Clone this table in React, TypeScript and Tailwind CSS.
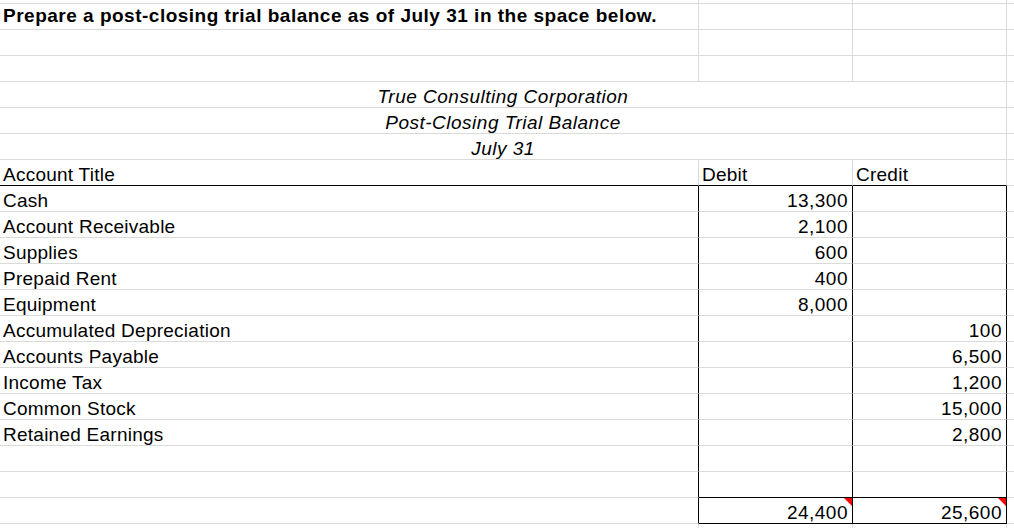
import React from 'react';

type Line = { title: string; debit?: string; credit?: string };

const lines: Line[] = [
  { title: 'Cash', debit: '13,300' },
  { title: 'Account Receivable', debit: '2,100' },
  { title: 'Supplies', debit: '600' },
  { title: 'Prepaid Rent', debit: '400' },
  { title: 'Equipment', debit: '8,000' },
  { title: 'Accumulated Depreciation', credit: '100' },
  { title: 'Accounts Payable', credit: '6,500' },
  { title: 'Income Tax', credit: '1,200' },
  { title: 'Common Stock', credit: '15,000' },
  { title: 'Retained Earnings', credit: '2,800' },
  { title: '' },
  { title: '' },
];

const grid = 'border-[#dadada]';

function Marker() {
  return (
    <svg className="absolute right-0 top-0" width="8" height="8" viewBox="0 0 8 8">
      <polygon points="0,0 8,0 8,8" fill="#ff0000" />
    </svg>
  );
}

function PlainRow() {
  return (
    <div className={`flex h-[26px] border-b ${grid}`}>
      <div className={`w-[699px] shrink-0 border-r ${grid}`} />
      <div className={`w-[154px] shrink-0 border-r ${grid}`} />
      <div className={`w-[154px] shrink-0 border-r ${grid}`} />
      <div className="flex-1" />
    </div>
  );
}

function TitleRow({ text }: { text: string }) {
  return (
    <div className={`flex h-[26px] border-b ${grid}`}>
      <div className={`w-[1007px] shrink-0 border-r ${grid} flex items-end justify-center italic leading-[21px] tracking-[0.5px]`}>
        {text}
      </div>
      <div className="flex-1" />
    </div>
  );
}

function App() {
  return (
    <div className="h-[528px] w-[1014px] overflow-hidden bg-white text-[19px] text-black tracking-[0.25px] font-['Liberation_Sans',Arial,sans-serif]">
      {/* sliver of the row above */}
      <div className={`flex h-[4px] border-b ${grid}`}>
        <div className={`w-[699px] shrink-0 border-r ${grid}`} />
        <div className={`w-[154px] shrink-0 border-r ${grid}`} />
        <div className={`w-[154px] shrink-0 border-r ${grid}`} />
      </div>

      <div className={`flex h-[26px] border-b ${grid}`}>
        <div className={`w-[699px] shrink-0 border-r ${grid} flex items-end pl-[3px] pb-[3px] leading-[21px] font-bold tracking-[0.5px] whitespace-nowrap`}>
          Prepare a post-closing trial balance as of July 31 in the space below.
        </div>
        <div className={`w-[154px] shrink-0 border-r ${grid}`} />
        <div className={`w-[154px] shrink-0 border-r ${grid}`} />
        <div className="flex-1" />
      </div>
      <PlainRow />
      <PlainRow />

      <TitleRow text="True Consulting Corporation" />
      <TitleRow text="Post-Closing Trial Balance" />
      <TitleRow text="July 31" />

      <div className="flex h-[26px]">
        <div className={`w-[699px] shrink-0 border-r border-b ${grid} border-b-black flex items-end pl-[3px] leading-[21px]`}>Account Title</div>
        <div className={`w-[154px] shrink-0 border-r border-b ${grid} border-b-black flex items-end pl-[3px] leading-[21px]`}>Debit</div>
        <div className={`w-[154px] shrink-0 border-r border-b ${grid} border-b-black flex items-end pl-[3px] leading-[21px]`}>Credit</div>
        <div className={`flex-1 border-b ${grid}`} />
      </div>

      {lines.map((l, i) => {
        const boxBottom = i === lines.length - 1 ? 'border-b-black' : '';
        return (
          <div key={i} className="flex h-[26px]">
            <div className={`w-[699px] shrink-0 border-b border-r ${grid} border-r-black flex items-end pl-[3px] leading-[21px] whitespace-nowrap`}>
              {l.title}
            </div>
            <div className={`w-[154px] shrink-0 border-b border-r ${grid} border-r-black ${boxBottom} flex items-end justify-end pr-[4px] leading-[21px] tracking-[0.5px]`}>
              {l.debit}
            </div>
            <div className={`w-[154px] shrink-0 border-b border-r ${grid} border-r-black ${boxBottom} flex items-end justify-end pr-[4px] leading-[21px] tracking-[0.5px]`}>
              {l.credit}
            </div>
            <div className={`flex-1 border-b ${grid}`} />
          </div>
        );
      })}

      {/* totals */}
      <div className="flex h-[26px]">
        <div className={`w-[699px] shrink-0 border-b border-r ${grid} border-r-black`} />
        <div className="relative w-[154px] shrink-0 border-b border-r border-black flex items-end justify-end pr-[4px] leading-[21px] tracking-[0.5px]">
          24,400
          <Marker />
        </div>
        <div className="relative w-[154px] shrink-0 border-b border-r border-black flex items-end justify-end pr-[4px] leading-[21px] tracking-[0.5px]">
          25,600
          <Marker />
        </div>
        <div className={`flex-1 border-b ${grid}`} />
      </div>

      <div className="flex h-[26px]">
        <div className={`w-[699px] shrink-0 border-r ${grid}`} />
        <div className={`w-[154px] shrink-0 border-r ${grid}`} />
        <div className={`w-[154px] shrink-0 border-r ${grid}`} />
      </div>
    </div>
  );
}

export default App;
